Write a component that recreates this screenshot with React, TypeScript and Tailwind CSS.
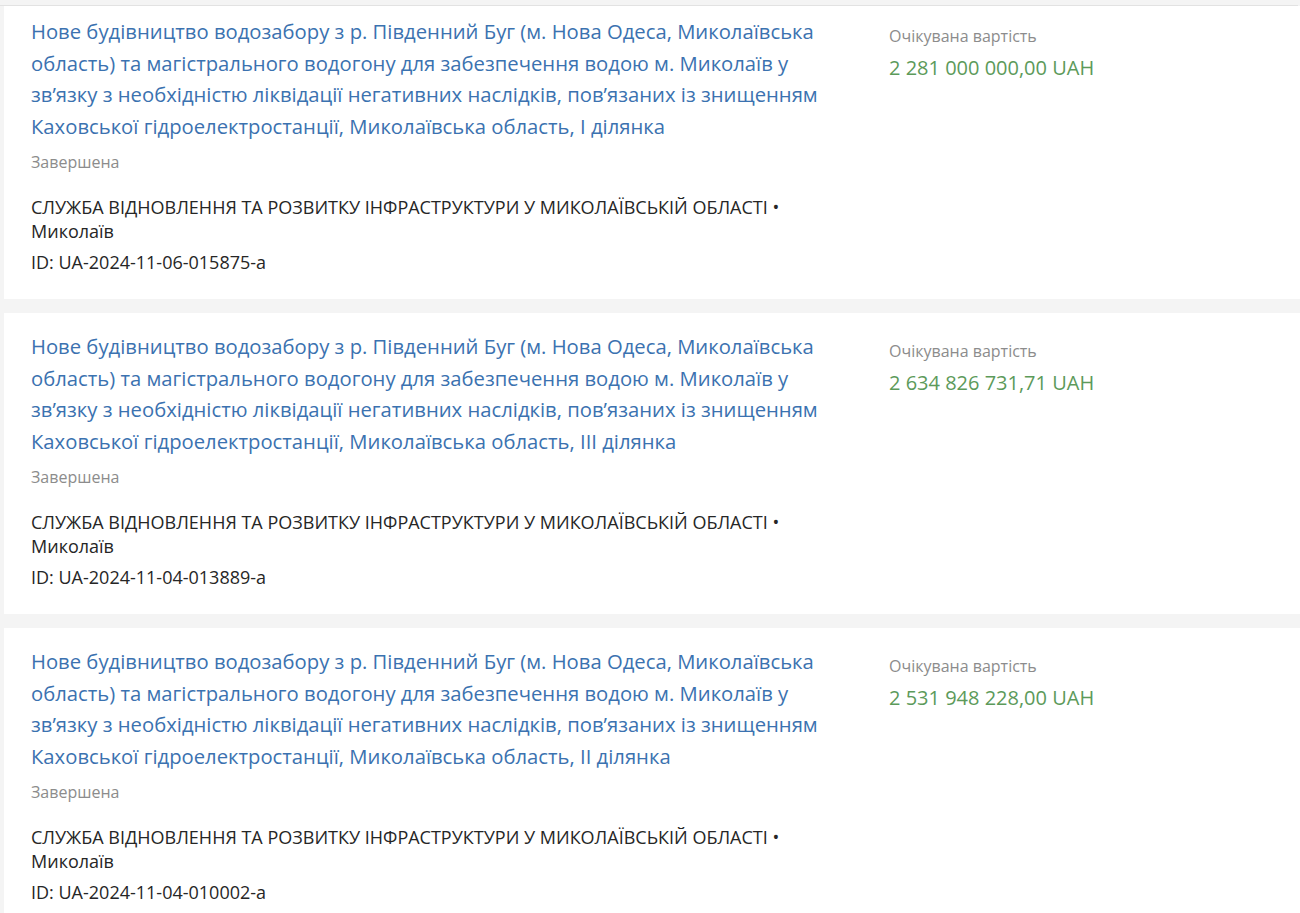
const ITEMS = [
  {
    title:
      "Нове будівництво водозабору з р. Південний Буг (м. Нова Одеса, Миколаївська область) та магістрального водогону для забезпечення водою м. Миколаїв у зв’язку з необхідністю ліквідації негативних наслідків, пов’язаних із знищенням Каховської гідроелектростанції, Миколаївська область, І ділянка",
    amount: "2 281 000 000,00 UAH",
    id: "UA-2024-11-06-015875-a",
  },
  {
    title:
      "Нове будівництво водозабору з р. Південний Буг (м. Нова Одеса, Миколаївська область) та магістрального водогону для забезпечення водою м. Миколаїв у зв’язку з необхідністю ліквідації негативних наслідків, пов’язаних із знищенням Каховської гідроелектростанції, Миколаївська область, ІІІ ділянка",
    amount: "2 634 826 731,71 UAH",
    id: "UA-2024-11-04-013889-a",
  },
  {
    title:
      "Нове будівництво водозабору з р. Південний Буг (м. Нова Одеса, Миколаївська область) та магістрального водогону для забезпечення водою м. Миколаїв у зв’язку з необхідністю ліквідації негативних наслідків, пов’язаних із знищенням Каховської гідроелектростанції, Миколаївська область, ІІ ділянка",
    amount: "2 531 948 228,00 UAH",
    id: "UA-2024-11-04-010002-a",
  },
];

function TenderCard({ item, first }: { item: (typeof ITEMS)[number]; first?: boolean }) {
  return (
    <div className={`bg-white flex pl-[27px] pb-[25px] ${first ? "pt-[10px]" : "pt-[18px]"}`}>
      <div className="w-[800px] shrink-0">
        <a href="#" className="block text-[20.25px] leading-[31.5px] text-[#3b72b0]">
          {item.title}
        </a>
        <div className="mt-[9px] text-[16px] leading-[22px] text-[#8c8c8c]">Завершена</div>
        <div className="mt-[22px] text-[18px] leading-[24px] text-[#262626]">
          СЛУЖБА ВІДНОВЛЕННЯ ТА РОЗВИТКУ ІНФРАСТРУКТУРИ У МИКОЛАЇВСЬКІЙ ОБЛАСТІ • Миколаїв
        </div>
        <div className="mt-[7px] text-[18px] leading-[24px] text-[#262626]">ID: {item.id}</div>
      </div>
      <div className="ml-[58px] pt-[9px]">
        <div className="text-[16px] leading-[22px] text-[#8c8c8c]">Очікувана вартість</div>
        <div className="mt-[9px] text-[20px] leading-[24px] text-[#5c9a5a]">{item.amount}</div>
      </div>
    </div>
  );
}

export default function App() {
  return (
    <div
      className="h-[913px] overflow-hidden bg-[#f4f4f4]"
      style={{ fontFamily: '"Open Sans", "Noto Sans", sans-serif' }}
    >
      <div className="h-[5px]" />
      <div className="h-px bg-[#e2e2e2] mr-[2px]" />
      <div className="pl-[4px] flex flex-col gap-[14px]">
        {ITEMS.map((item, i) => (
          <TenderCard key={item.id} item={item} first={i === 0} />
        ))}
      </div>
    </div>
  );
}
